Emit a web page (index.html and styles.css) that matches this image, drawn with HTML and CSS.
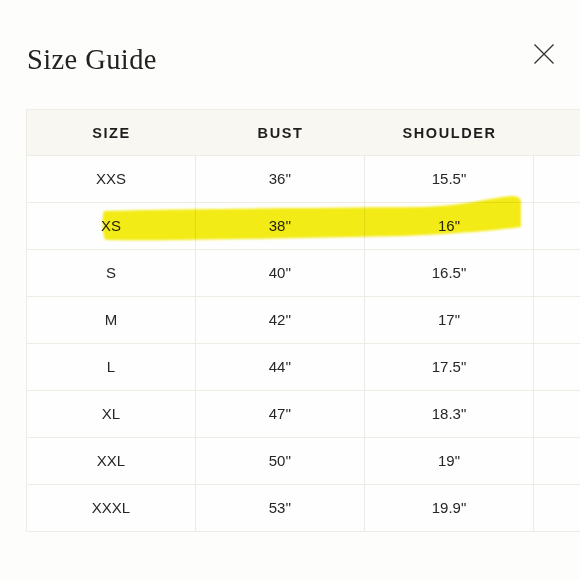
FILE: index.html
```html
<!DOCTYPE html>
<html>
<head>
<meta charset="utf-8">
<link rel="stylesheet" href="styles.css">
</head>
<body>
<div class="page">
  <header class="top">
    <h1 class="title">Size Guide</h1>
    <button class="close" aria-label="Close">
      <svg width="22" height="22" viewBox="0 0 22 22"><path d="M1.5 1.5 L20.5 20.5 M20.5 1.5 L1.5 20.5" stroke="#333" stroke-width="1.3" fill="none"/></svg>
    </button>
  </header>
  <div class="table">
    <div class="cell head">SIZE</div><div class="cell head">BUST</div><div class="cell head">SHOULDER</div><div class="cell head"></div>
    <div class="cell">XXS</div><div class="cell">36''</div><div class="cell">15.5"</div><div class="cell"></div>
    <div class="cell">XS</div><div class="cell">38''</div><div class="cell">16"</div><div class="cell"></div>
    <div class="cell">S</div><div class="cell">40''</div><div class="cell">16.5"</div><div class="cell"></div>
    <div class="cell">M</div><div class="cell">42''</div><div class="cell">17"</div><div class="cell"></div>
    <div class="cell">L</div><div class="cell">44''</div><div class="cell">17.5"</div><div class="cell"></div>
    <div class="cell">XL</div><div class="cell">47''</div><div class="cell">18.3"</div><div class="cell"></div>
    <div class="cell">XXL</div><div class="cell">50''</div><div class="cell">19"</div><div class="cell"></div>
    <div class="cell">XXXL</div><div class="cell">53''</div><div class="cell">19.9"</div><div class="cell"></div>
  </div>
  <svg class="marker" width="580" height="580" viewBox="0 0 580 580">
    <defs><filter id="soft"><feGaussianBlur stdDeviation="0.8"/></filter></defs>
    <path filter="url(#soft)" d="M104 211 C170 209 300 208 420 207 C465 206 488 198 512 196 C518 196 521 198 521 203 L521 227 C480 232 430 236 350 237 C250 239 150 241 106 240 C102 238 102 214 104 211 Z" fill="#f4ec12"/>
  </svg>
</div>
</body>
</html>
```
FILE: styles.css
```css
html, body {
  margin: 0;
  padding: 0;
  background: #fdfdfc;
  overflow: hidden;
}
.page {
  position: relative;
  width: 580px;
  height: 580px;
  overflow: hidden;
}
.top {
  display: flex;
  justify-content: space-between;
  align-items: flex-start;
  padding: 42px 25px 0 27px;
  height: 72px;
  box-sizing: border-box;
}
.title {
  margin: 0;
  font-family: "Liberation Serif", serif;
  font-weight: 400;
  font-size: 28.5px;
  line-height: 36px;
  letter-spacing: 0.4px;
  color: #222;
}
.close {
  margin-top: 1px;
  border: 0;
  background: none;
  padding: 0;
  width: 22px;
  height: 22px;
}
.table {
  margin-left: 26px;
  display: grid;
  grid-template-columns: repeat(4, 169px);
  grid-template-rows: 46px;
  grid-auto-rows: 47px;
  width: 676px;
  border-left: 1px solid #efece6;
  border-bottom: 1px solid #efece6;
  margin-top: 37px;
}
.cell {
  display: flex;
  align-items: center;
  justify-content: center;
  font-family: "Liberation Sans", Arial, sans-serif;
  font-size: 15px;
  color: #262626;
  border-top: 1px solid #efece6;
  border-right: 1px solid #eceae6;
  box-sizing: border-box;
  background: #fefefe;
  padding-bottom: 2px;
}
.cell.head {
  background: #f8f7f2;
  font-weight: 700;
  font-size: 14.5px;
  letter-spacing: 1.6px;
  color: #1e1e1e;
  border-right: none;
  border-top: 1px solid #f0ede6;
  padding-bottom: 0;
}
.marker {
  position: absolute;
  left: 0;
  top: 0;
  mix-blend-mode: multiply;
  pointer-events: none;
}
```
